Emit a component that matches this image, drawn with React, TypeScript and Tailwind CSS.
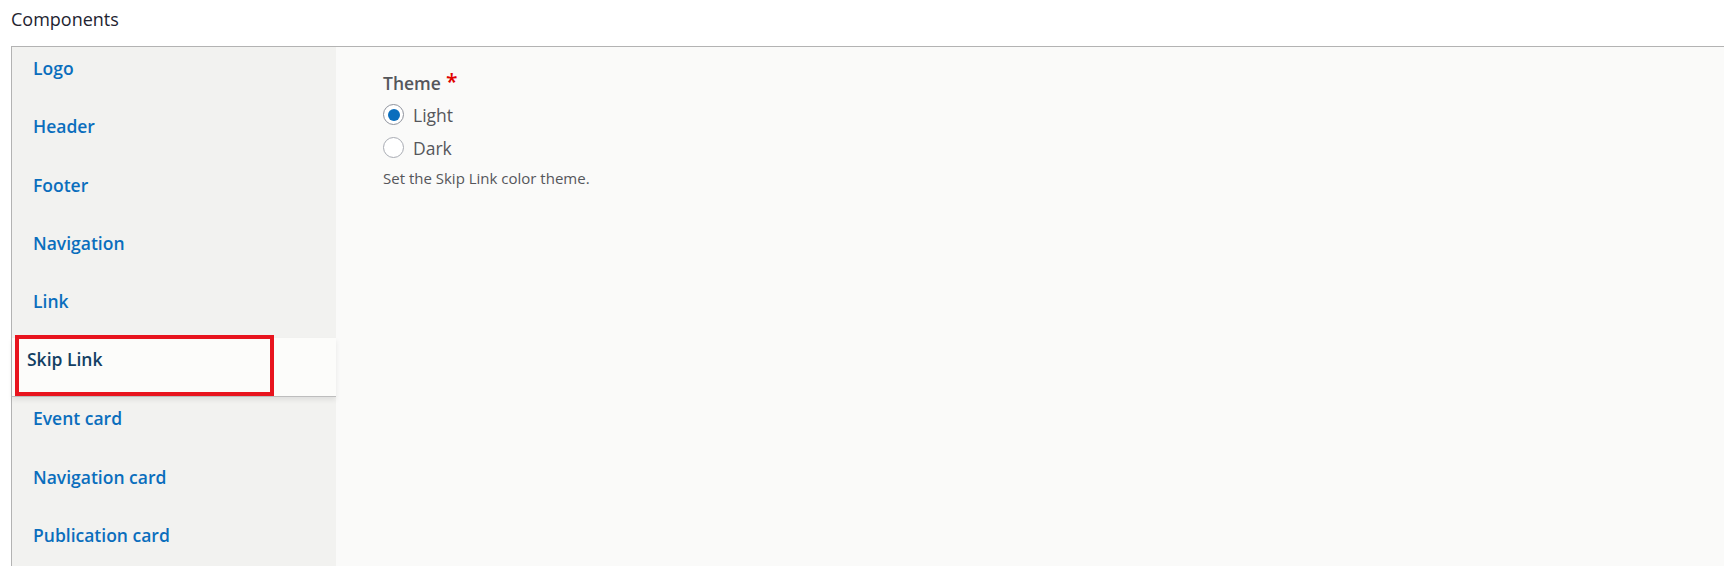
import React from "react";

const tabs = [
  "Logo",
  "Header",
  "Footer",
  "Navigation",
  "Link",
  "Skip Link",
  "Event card",
  "Navigation card",
  "Publication card",
];

export default function App() {
  const active = "Skip Link";

  return (
    <div className="min-h-[566px] bg-white font-['Open_Sans',sans-serif] text-[#222330]">
      <div className="pl-[11px] pt-[7px] pb-[15px] text-[18px] leading-[24px]">Components</div>
      <div className="ml-[11px] flex border-l border-t border-[#b3b3b3] min-h-[520px]">
        <ul className="w-[324px] shrink-0 bg-[#f2f2f0]">
          {tabs.map((t) =>
            t === active ? (
              <li
                key={t}
                className="relative h-[59px] bg-[#fcfcfa] border-b border-[#bdbdbd] shadow-[0_3px_5px_rgba(0,0,0,0.08)] pl-[15px] pt-[9px]"
              >
                <span className="text-[17.5px] leading-[24px] font-semibold text-[#123f63]">{t}</span>
                <span className="absolute left-[3px] top-[-3px] w-[259px] h-[61px] border-[4px] border-[#e8141e] pointer-events-none" />
              </li>
            ) : (
              <li key={t} className="h-[58.3px] pl-[21px] pt-[9px]">
                <a className="text-[17.5px] leading-[24px] font-semibold text-[#0a6ebd]">{t}</a>
              </li>
            )
          )}
        </ul>
        <div className="flex-1 bg-[#fafaf9] pl-[47px] pt-[24px]">
          <div className="flex items-start text-[17.5px] leading-[24px] font-semibold text-[#55565b]">
            Theme
            <span className="ml-[5px] text-[#e00100] text-[21px] leading-[20px]">*</span>
          </div>
          <div className="mt-[9px] flex flex-col gap-[12px]">
            <label className="flex items-center gap-[9px] h-[21px]">
              <span className="w-[21px] h-[21px] rounded-full border border-[#8e929c] bg-white flex items-center justify-center">
                <span className="w-[12px] h-[12px] rounded-full bg-[#0a6ebd]" />
              </span>
              <span className="text-[17.5px] leading-[24px] text-[#55565b]">Light</span>
            </label>
            <label className="flex items-center gap-[9px] h-[21px]">
              <span className="w-[21px] h-[21px] rounded-full border border-[#a8abb3] bg-white" />
              <span className="text-[17.5px] leading-[24px] text-[#55565b]">Dark</span>
            </label>
          </div>
          <p className="mt-[10px] text-[15px] leading-[20px] text-[#55565b]">Set the Skip Link color theme.</p>
        </div>
      </div>
    </div>
  );
}
